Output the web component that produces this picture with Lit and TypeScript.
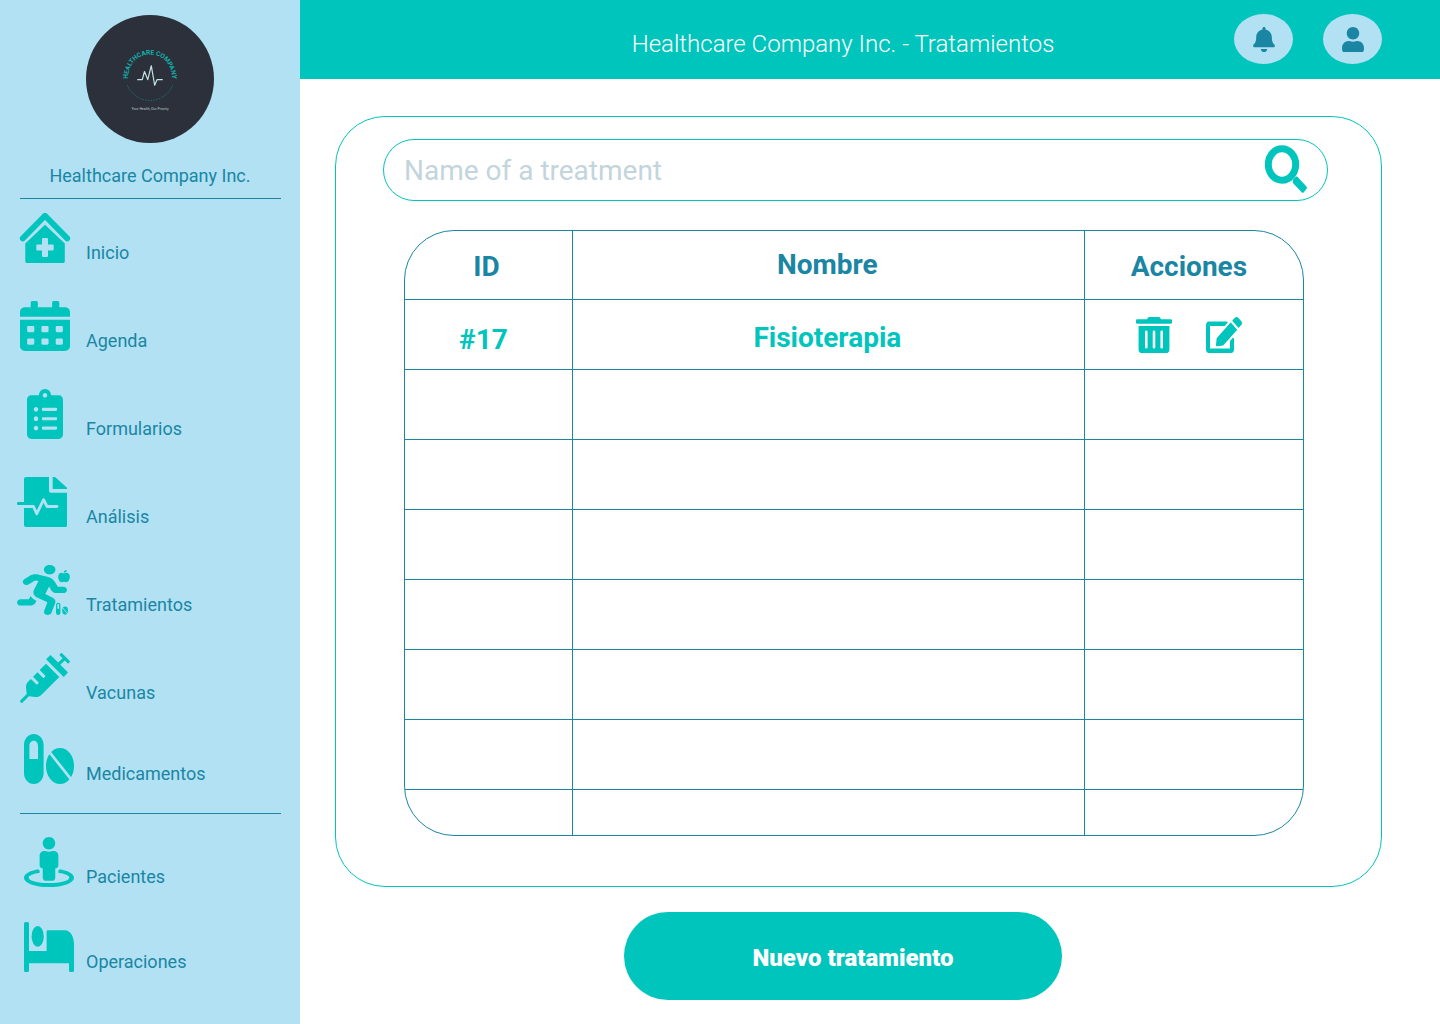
import { LitElement, html, svg, css, nothing, TemplateResult } from "lit";
import { customElement, property, state } from "lit/decorators.js";

/* Navigation icons share one 58x50 canvas so that their labels line up. */
const NAV_ICONS: Record<string, TemplateResult> = {
  home: svg`
    <g transform="translate(4 0)">
      <path d="M2.800 25.400 25 2.800 47.200 25.400" fill="none" stroke="currentColor" stroke-width="5.800" stroke-linecap="round" stroke-linejoin="round"/>
      <path fill-rule="evenodd" d="M25 11.8 44.8 30.6V48.6a1.4 1.4 0 0 1-1.4 1.4H6.7a1.4 1.4 0 0 1-1.4-1.4V30.6ZM23 25a1 1 0 0 0-1 1v5.4h-4.7a1 1 0 0 0-1 1v4.2a1 1 0 0 0 1 1H22V43a1 1 0 0 0 1 1h4a1 1 0 0 0 1-1v-5.4h4.7a1 1 0 0 0 1-1v-4.2a1 1 0 0 0-1-1H28V26a1 1 0 0 0-1-1Z"/>
    </g>`,
  calendar: svg`
    <svg x="4" y="0" width="50" height="50" viewBox="0 0 448 512" preserveAspectRatio="none">
      <path d="M0 464c0 26.500 21.500 48 48 48h352c26.500 0 48-21.500 48-48V192H0v272zm320-196c0-6.600 5.400-12 12-12h40c6.600 0 12 5.400 12 12v40c0 6.600-5.400 12-12 12h-40c-6.600 0-12-5.400-12-12v-40zm0 128c0-6.600 5.400-12 12-12h40c6.600 0 12 5.400 12 12v40c0 6.600-5.400 12-12 12h-40c-6.600 0-12-5.400-12-12v-40zM192 268c0-6.600 5.400-12 12-12h40c6.600 0 12 5.400 12 12v40c0 6.600-5.400 12-12 12h-40c-6.600 0-12-5.400-12-12v-40zm0 128c0-6.600 5.400-12 12-12h40c6.600 0 12 5.400 12 12v40c0 6.600-5.400 12-12 12h-40c-6.600 0-12-5.400-12-12v-40zM64 268c0-6.600 5.400-12 12-12h40c6.600 0 12 5.400 12 12v40c0 6.600-5.400 12-12 12H76c-6.600 0-12-5.400-12-12v-40zm0 128c0-6.600 5.400-12 12-12h40c6.600 0 12 5.400 12 12v40c0 6.600-5.400 12-12 12H76c-6.600 0-12-5.400-12-12v-40zM400 64h-48V16c0-8.800-7.200-16-16-16h-32c-8.800 0-16 7.200-16 16v48H160V16c0-8.800-7.200-16-16-16h-32c-8.800 0-16 7.200-16 16v48H48C21.500 64 0 85.500 0 112v48h448v-48c0-26.500-21.500-48-48-48z"/>
    </svg>`,
  clipboard: svg`
    <svg x="11" y="0" width="36" height="50" viewBox="0 0 384 512" preserveAspectRatio="none">
      <path d="M336 64h-80c0-35.300-28.700-64-64-64s-64 28.700-64 64H48C21.500 64 0 85.500 0 112v352c0 26.500 21.500 48 48 48h288c26.500 0 48-21.500 48-48V112c0-26.500-21.500-48-48-48zM96 424c-13.300 0-24-10.700-24-24s10.700-24 24-24 24 10.700 24 24-10.700 24-24 24zm0-96c-13.300 0-24-10.700-24-24s10.700-24 24-24 24 10.700 24 24-10.700 24-24 24zm0-96c-13.300 0-24-10.700-24-24s10.700-24 24-24 24 10.700 24 24-10.700 24-24 24zm96-192c13.300 0 24 10.700 24 24s-10.700 24-24 24-24-10.700-24-24 10.700-24 24-24zm128 368c0 4.400-3.600 8-8 8H168c-4.400 0-8-3.600-8-8v-16c0-4.400 3.600-8 8-8h144c4.400 0 8 3.600 8 8v16zm0-96c0 4.400-3.600 8-8 8H168c-4.400 0-8-3.600-8-8v-16c0-4.400 3.600-8 8-8h144c4.400 0 8 3.600 8 8v16zm0-96c0 4.400-3.600 8-8 8H168c-4.400 0-8-3.600-8-8v-16c0-4.400 3.600-8 8-8h144c4.400 0 8 3.600 8 8v16z"/>
    </svg>`,
  analysis: svg`
    <g transform="translate(1 0)">
      <path d="M9 0H32V13.700a2 2 0 0 0 2 2H50V48.500a1.500 1.500 0 0 1-1.500 1.500H9a2 2 0 0 1-2-2V28H1.300A1.300 1.300 0 0 1 0 26.700v-.4A1.300 1.300 0 0 1 1.300 25H7V2a2 2 0 0 1 2-2Z"/>
      <path d="M35.700 0h1.600a2 2 0 0 1 1.300.500L49.200 9.900a2 2 0 0 1 .8 1.600v.5H35.700Z"/>
      <path class="cut" d="M7 29.500H16.500L19.700 36.800 26.600 22.700 30 29.500H40" fill="none" stroke-width="2.800" stroke-linecap="round" stroke-linejoin="round"/>
    </g>`,
  treatment: svg`
    <svg x="1" y="0" width="50" height="50" viewBox="0 0 416 512" preserveAspectRatio="none">
      <path d="M272 96c26.510 0 48-21.490 48-48S298.510 0 272 0s-48 21.490-48 48 21.490 48 48 48zM113.690 317.470l-14.800 34.520H32c-17.670 0-32 14.330-32 32s14.330 32 32 32h77.450c19.250 0 36.580-11.440 44.110-29.090l8.790-20.520-10.670-6.300c-17.320-10.230-30.060-25.370-37.990-42.610zM384 223.990h-44.030l-26.060-53.250c-12.500-25.550-35.450-44.230-61.780-50.940l-71.080-21.140c-28.300-6.800-57.770-.550-80.840 17.140l-39.670 30.410c-14.030 10.750-16.690 30.830-5.920 44.860s30.840 16.660 44.860 5.920l39.690-30.410c7.670-5.890 17.440-8 25.270-6.140l14.700 4.370-37.460 87.390c-12.620 29.480-1.310 64.010 26.300 80.310l84.980 50.170-27.470 87.730c-5.280 16.860 4.110 34.820 20.970 40.090 3.190 1 6.410 1.480 9.580 1.480 13.610 0 26.230-8.770 30.520-22.450l31.640-101.060c5.910-20.770-2.890-43.080-21.640-54.390l-61.240-36.140 31.310-78.280 20.270 41.430c8 16.340 24.920 26.890 43.110 26.890H384c17.670 0 32-14.330 32-32s-14.330-31.990-32-31.990z"/>
    </svg>
    <path d="M48 8.600C46.500 7.600 44.600 7.500 43.300 8.800 42.200 10 42 11.800 42.400 13.500 42.900 15.600 44.200 17.200 45.600 17.200 46.500 17.200 47.200 16.700 48 16.700S49.500 17.200 50.400 17.200C51.900 17.200 53.300 15.300 53.700 13.300 54.100 11.600 53.800 10 52.700 8.800 51.400 7.500 49.500 7.600 48 8.600ZM47.700 7.800C47.700 6 48.700 5.100 50.700 5 50.700 6.800 49.600 7.800 47.700 7.800Z"/>
    <path fill-rule="evenodd" d="M40 40a2.200 2.200 0 0 1 4.400 0v7.800a2.200 2.200 0 0 1-4.400 0ZM41.300 40v3.800h1.800V40a.9.900 0 0 0-1.800 0Z"/>
    <ellipse cx="49.100" cy="45.600" rx="2.900" ry="4.100"/>
    <path class="cut" d="M46.500 42.500 51.600 49" fill="none" stroke-width=".8"/>`,
  syringe: svg`
    <svg x="4" y="0" width="50" height="50" viewBox="0 0 512 512">
      <path d="M201.500 174.800l55.700 55.800c3.100 3.100 3.100 8.200 0 11.300l-11.300 11.300c-3.100 3.100-8.200 3.100-11.300 0l-55.700-55.800-45.300 45.300 55.800 55.800c3.100 3.100 3.100 8.200 0 11.300l-11.300 11.300c-3.100 3.100-8.200 3.100-11.300 0L111 265.200l-26.400 26.400c-17.300 17.300-25.600 41.100-23 65.400l7.100 63.600L2.300 487c-3.100 3.100-3.100 8.200 0 11.300l11.300 11.300c3.100 3.100 8.200 3.100 11.300 0l66.300-66.300 63.600 7.100c23.900 2.600 47.900-5.400 65.400-23l181.900-181.900-135.700-135.700-64.900 65zm308.200-93.300L430.500 2.300c-3.100-3.100-8.200-3.100-11.300 0l-11.300 11.300c-3.100 3.100-3.100 8.200 0 11.300l28.300 28.300-45.300 45.300-56.600-56.600-17-17c-3.100-3.100-8.200-3.100-11.300 0l-33.900 33.900c-3.100 3.100-3.100 8.200 0 11.300l17 17L424.800 223l17 17c3.100 3.100 8.200 3.100 11.300 0l33.900-34c3.100-3.100 3.100-8.200 0-11.300l-73.500-73.500 45.300-45.300 28.300 28.300c3.100 3.100 8.200 3.100 11.300 0l11.300-11.300c3.100-3.200 3.100-8.200 0-11.400z"/>
    </svg>`,
  pills: svg`
    <g transform="translate(8 0)">
      <path fill-rule="evenodd" d="M0 11C0 5 4 0 9.800 0s9.800 5 9.800 11V39c0 6-4 11-9.800 11S0 45 0 39ZM5.400 12.500V25H14V12.500C14 9 12.500 6.800 9.700 6.800S5.400 9 5.400 12.500Z"/>
      <ellipse cx="36" cy="32" rx="14" ry="18"/>
      <path class="cut" d="M25 17.500 48 46.500" fill="none" stroke-width="2.800"/>
    </g>`,
  patient: svg`
    <svg x="8" y="0" width="50" height="50" viewBox="0 0 512 512">
      <path d="M367.900 329.760c-4.620 5.300-9.780 10.100-15.900 13.650v22.940c66.520 9.340 112 28.050 112 49.650 0 30.930-93.120 56-208 56S48 446.930 48 416c0-21.600 45.480-40.300 112-49.650v-22.940c-6.120-3.550-11.280-8.350-15.900-13.650C58.870 345.340 0 378.050 0 416c0 53.020 114.620 96 256 96s256-42.980 256-96c0-37.950-58.870-70.660-144.100-86.240zM256 128c35.350 0 64-28.650 64-64S291.350 0 256 0s-64 28.650-64 64 28.650 64 64 64zm-64 192v96c0 17.670 14.330 32 32 32h64c17.670 0 32-14.330 32-32v-96c17.670 0 32-14.330 32-32v-96c0-26.510-21.490-48-48-48h-11.800c-11.070 5.030-23.260 8-36.200 8s-25.130-2.970-36.200-8H208c-26.510 0-48 21.490-48 48v96c0 17.670 14.330 32 32 32z"/>
    </svg>`,
  bed: svg`
    <g transform="translate(8 0)">
      <path d="M1.500 0h2A1.500 1.500 0 0 1 5 1.500V29H22.600V9.500A1.300 1.300 0 0 1 23.900 8.200H41C46.500 8.200 50 15 50 22V48.500a1.500 1.500 0 0 1-1.500 1.500h-2a1.500 1.500 0 0 1-1.500-1.500V41.300H5V48.500A1.500 1.500 0 0 1 3.500 50h-2A1.500 1.500 0 0 1 0 48.500V1.500A1.500 1.500 0 0 1 1.500 0Z"/>
      <ellipse cx="13.700" cy="14.400" rx="6.100" ry="10.400"/>
    </g>`,
};

const BELL = "M224 512c35.320 0 63.970-28.650 63.970-64H160.030c0 35.350 28.650 64 63.970 64zm215.390-149.710c-19.320-20.760-55.470-51.990-55.470-154.290 0-77.700-54.480-139.900-127.940-155.160V32c0-17.670-14.320-32-31.980-32s-31.980 14.330-31.980 32v20.840C118.560 68.100 64.080 130.300 64.080 208c0 102.300-36.150 133.530-55.470 154.290-6 6.450-8.660 14.160-8.610 21.710.110 16.400 12.980 32 32.100 32h383.800c19.120 0 32-15.600 32.100-32 .050-7.550-2.610-15.270-8.610-21.710z";
const USER = "M224 256c70.700 0 128-57.300 128-128S294.700 0 224 0 96 57.300 96 128s57.300 128 128 128zm89.600 32h-16.700c-22.200 10.200-46.900 16-72.900 16s-50.600-5.800-72.900-16h-16.700C60.200 288 0 348.200 0 422.400V464c0 26.500 21.500 48 48 48h352c26.500 0 48-21.500 48-48v-41.600c0-74.200-60.200-134.400-134.400-134.400z";
const TRASH = "M32 464a48 48 0 0 0 48 48h288a48 48 0 0 0 48-48V128H32zm272-256a16 16 0 0 1 32 0v224a16 16 0 0 1-32 0zm-96 0a16 16 0 0 1 32 0v224a16 16 0 0 1-32 0zm-96 0a16 16 0 0 1 32 0v224a16 16 0 0 1-32 0zM432 32H312l-9.400-18.700A24 24 0 0 0 281.100 0H166.800a23.720 23.720 0 0 0-21.400 13.300L136 32H16A16 16 0 0 0 0 48v32a16 16 0 0 0 16 16h416a16 16 0 0 0 16-16V48a16 16 0 0 0-16-16z";
const EDIT = "M402.600 83.200l90.200 90.200c3.800 3.800 3.800 10 0 13.800L274.400 405.600l-92.800 10.300c-12.400 1.400-22.900-9.100-21.500-21.500l10.300-92.800L388.800 83.200c3.800-3.800 10-3.800 13.800 0zm162-22.900l-48.800-48.800c-15.200-15.200-39.900-15.200-55.200 0l-35.400 35.400c-3.800 3.800-3.800 10 0 13.800l90.200 90.200c3.800 3.800 10 3.800 13.800 0l35.400-35.400c15.200-15.300 15.200-40 0-55.200zM384 346.200V448H64V128h229.800c3.200 0 6.200-1.300 8.500-3.500l40-40c7.600-7.600 2.200-20.500-8.500-20.500H48C21.500 64 0 85.500 0 112v352c0 26.500 21.500 48 48 48h352c26.500 0 48-21.500 48-48V306.200c0-10.700-12.900-16-20.500-8.500l-40 40c-2.200 2.300-3.500 5.300-3.500 8.500z";

interface NavItem {
  icon: string;
  label: string;
}

@customElement("brand-logo")
class BrandLogo extends LitElement {
  static styles = css`
    :host {
      display: block;
    }
    .disc {
      display: block;
      width: 128px;
      height: 128px;
    }
    .arc {
      font: 700 13px Roboto, "Liberation Sans", sans-serif;
      fill: #12b3b0;
    }
    .motto {
      font: 400 7px Roboto, "Liberation Sans", sans-serif;
      fill: #b9c9cc;
    }
  `;

  render() {
    return html`
      <svg class="disc" viewBox="0 0 256 256" aria-label="Healthcare Company" role="img">
        <circle cx="128" cy="128" r="128" fill="#2b303a" />
        <path id="arc" d="M85 132V122A43 43 0 0 1 171 122V132" fill="none" />
        <text class="arc" text-anchor="middle">
          <textPath href="#arc" startOffset="50%">HEALTHCARE COMPANY</textPath>
        </text>
        <path d="M82.500 140A49 49 0 0 0 173.500 140" fill="none" stroke="#1a7f86" stroke-width="1.600" stroke-dasharray="3 2.400" />
        <path d="M102.500 129.300H112.500L117 113 123.500 129.300 130.600 101.500 137.300 140.500 142 129.300H153.500" fill="none" stroke="#c4e4e2" stroke-width="2.400" stroke-linejoin="round" />
        <text class="motto" x="128" y="189" text-anchor="middle">Your Health, Our Priority</text>
      </svg>
    `;
  }
}

@customElement("side-nav")
class SideNav extends LitElement {
  @property({ attribute: false }) groups: NavItem[][] = [];

  static styles = css`
    :host {
      display: block;
    }
    .list {
      list-style: none;
      margin: 0;
      padding: 0;
      display: flex;
      flex-direction: column;
      gap: var(--nav-gap, 38px);
    }
    .list + .list {
      margin-top: 31px;
    }
    .link {
      display: flex;
      align-items: flex-end;
      gap: 12px;
      color: #1a86a4;
      font-size: 18px;
      line-height: 20px;
      text-decoration: none;
    }
    .icon {
      width: 58px;
      height: 50px;
      flex: none;
      color: #00c5bc;
      fill: currentColor;
    }
    .cut {
      stroke: #b1e1f3;
    }
  `;

  render() {
    return html`
      <nav>
        ${this.groups.map(
          (group) => html`
            <ul class="list">
              ${group.map(
                (item) => html`
                  <li>
                    <a class="link" href="#${item.icon}">
                      <svg class="icon" viewBox="0 0 58 50" aria-hidden="true">${NAV_ICONS[item.icon]}</svg>
                      <span>${item.label}</span>
                    </a>
                  </li>
                `
              )}
            </ul>
          `
        )}
      </nav>
    `;
  }
}

interface Treatment {
  id: string;
  name: string;
}

@customElement("treatment-table")
class TreatmentTable extends LitElement {
  @property({ attribute: false }) rows: (Treatment | null)[] = [];

  static styles = css`
    :host {
      display: block;
      border: 1px solid #1a86a4;
      border-radius: 50px;
    }
    .table {
      width: 100%;
      border-collapse: separate;
      border-spacing: 0;
      table-layout: fixed;
      font-size: 28px;
      line-height: 32px;
      font-weight: 700;
      text-align: center;
    }
    .col-id {
      width: 18.7%;
    }
    .col-name {
      width: 57%;
    }
    .head,
    .cell {
      box-sizing: border-box;
      border-right: 1px solid #1a86a4;
      border-bottom: 1px solid #1a86a4;
    }
    .head {
      height: 69px;
      padding: 4px 4px 0 0;
      color: #1a86a4;
    }
    .cell {
      height: 70px;
      padding: 10px 10px 0 0;
      color: #00c5bc;
    }
    .head.name {
      padding: 0 2px 0 0;
    }
    .cell.name {
      padding: 6px 2px 0 0;
    }
    .actions-col {
      border-right: 0;
    }
    .head.actions-col {
      padding-right: 10px;
    }
    .cell.actions-col {
      padding-top: 0;
    }
    .last .cell {
      height: 45px;
      border-bottom: 0;
    }
    .actions {
      display: flex;
      justify-content: center;
      gap: 34px;
    }
    .action {
      padding: 0;
      border: 0;
      background: none;
      color: #00c5bc;
      cursor: pointer;
    }
    .glyph {
      display: block;
      width: 36px;
      height: 36px;
      fill: currentColor;
    }
  `;

  private renderRow(row: Treatment | null, last: boolean) {
    return html`
      <tr class=${last ? "last" : nothing}>
        <td class="cell">${row?.id}</td>
        <td class="cell name">${row?.name}</td>
        <td class="cell actions-col">
          ${row
            ? html`
                <div class="actions">
                  <button class="action" type="button" aria-label="Eliminar ${row.name}">
                    <svg class="glyph" viewBox="0 0 448 512" preserveAspectRatio="none"><path d=${TRASH} /></svg>
                  </button>
                  <button class="action" type="button" aria-label="Editar ${row.name}">
                    <svg class="glyph" viewBox="0 0 576 512" preserveAspectRatio="none"><path d=${EDIT} /></svg>
                  </button>
                </div>
              `
            : nothing}
        </td>
      </tr>
    `;
  }

  render() {
    return html`
      <table class="table">
        <colgroup>
          <col class="col-id" />
          <col class="col-name" />
          <col />
        </colgroup>
        <thead>
          <tr>
            <th class="head" scope="col">ID</th>
            <th class="head name" scope="col">Nombre</th>
            <th class="head actions-col" scope="col">Acciones</th>
          </tr>
        </thead>
        <tbody>
          ${this.rows.map((row, i) => this.renderRow(row, i === this.rows.length - 1))}
        </tbody>
      </table>
    `;
  }
}

@customElement("app-root")
class AppRoot extends LitElement {
  @state() private query = "";

  private primary: NavItem[][] = [
    [
      { icon: "home", label: "Inicio" },
      { icon: "calendar", label: "Agenda" },
      { icon: "clipboard", label: "Formularios" },
      { icon: "analysis", label: "Análisis" },
      { icon: "treatment", label: "Tratamientos" },
      { icon: "syringe", label: "Vacunas" },
    ],
    [{ icon: "pills", label: "Medicamentos" }],
  ];

  private secondary: NavItem[][] = [
    [
      { icon: "patient", label: "Pacientes" },
      { icon: "bed", label: "Operaciones" },
    ],
  ];

  private rows: (Treatment | null)[] = [
    { id: "#17", name: "Fisioterapia" },
    ...Array<null>(7).fill(null),
  ];

  static styles = css`
    :host {
      display: grid;
      grid-template-columns: 300px minmax(0, 1fr);
      min-height: 100vh;
      background: #fff;
      font-family: Roboto, "Liberation Sans", sans-serif;
    }
    .sidebar {
      box-sizing: border-box;
      padding: 15px 19px 24px 16px;
      background: #b1e1f3;
      color: #1a86a4;
    }
    .secondary {
      --nav-gap: 35px;
    }
    .brand {
      display: flex;
      flex-direction: column;
      align-items: center;
      gap: 22px;
      margin-left: 3px;
      padding-bottom: 12px;
      font-size: 18px;
      line-height: 21px;
    }
    .brand-name {
      margin: 0;
    }
    .rule {
      height: 1px;
      margin: 0 0 14px 4px;
      border: 0;
      background: #1a86a4;
    }
    .rule.lower {
      margin: 29px 0 23px 4px;
    }
    .bar {
      display: flex;
      align-items: center;
      box-sizing: border-box;
      min-height: 79px;
      padding: 0 58px 1px 152px;
      background: #00c5bc;
    }
    .title {
      flex: 1;
      margin: 0;
      padding-top: 10px;
      color: #fff;
      font-size: 24px;
      line-height: 28px;
      font-weight: 300;
      text-align: center;
    }
    .bar-actions {
      display: flex;
      gap: 30px;
    }
    .round {
      display: grid;
      place-items: center;
      width: 59px;
      height: 50px;
      padding: 0;
      border: 0;
      border-radius: 50%;
      background: #b1e1f3;
      color: #1a86a4;
      cursor: pointer;
    }
    .round-glyph {
      width: 22px;
      height: 25px;
      padding-left: 1px;
      fill: currentColor;
    }
    .card {
      margin: 37px 58px 0 35px;
      padding: 22px 53px 50px 47px;
      border: 1px solid #00c5bc;
      border-radius: 50px;
    }
    .search {
      display: flex;
      align-items: center;
      box-sizing: border-box;
      height: 62px;
      padding: 0 20px;
      border: 1px solid #00c5bc;
      border-radius: 31px;
    }
    .field {
      flex: 1;
      min-width: 0;
      padding: 2px 0 0;
      border: 0;
      outline: 0;
      background: none;
      color: #1a86a4;
      font: inherit;
      font-size: 28px;
      line-height: 34px;
    }
    .field::placeholder {
      color: #c3d5dc;
      opacity: 1;
    }
    .go {
      padding: 0 0 2px;
      border: 0;
      background: none;
      color: #00c5bc;
      cursor: pointer;
    }
    .lens {
      display: block;
      width: 42px;
      height: 48px;
    }
    .grid {
      margin: 29px 24px 0 21px;
    }
    .footer {
      display: flex;
      justify-content: center;
      padding: 25px 54px 24px 0;
    }
    .create {
      width: 438px;
      height: 88px;
      padding: 4px 0 0 20px;
      border: 0;
      border-radius: 44px;
      background: #00c5bc;
      color: #fff;
      font-family: inherit;
      font-size: 24px;
      line-height: 28px;
      font-weight: 900;
      cursor: pointer;
    }
  `;

  render() {
    return html`
      <aside class="sidebar">
        <div class="brand">
          <brand-logo></brand-logo>
          <p class="brand-name">Healthcare Company Inc.</p>
        </div>
        <hr class="rule" />
        <side-nav .groups=${this.primary}></side-nav>
        <hr class="rule lower" />
        <side-nav class="secondary" .groups=${this.secondary}></side-nav>
      </aside>
      <div>
        <header class="bar">
          <h1 class="title">Healthcare Company Inc. - Tratamientos</h1>
          <div class="bar-actions">
            <button class="round" type="button" aria-label="Notificaciones">
              <svg class="round-glyph" viewBox="0 0 448 512"><path d=${BELL} /></svg>
            </button>
            <button class="round" type="button" aria-label="Perfil">
              <svg class="round-glyph" viewBox="0 0 448 512"><path d=${USER} /></svg>
            </button>
          </div>
        </header>
        <main>
          <section class="card">
            <form class="search" role="search" @submit=${(e: Event) => e.preventDefault()}>
              <input
                class="field"
                type="text"
                aria-label="Name of a treatment"
                placeholder="Name of a treatment"
                .value=${this.query}
                @input=${(e: Event) => (this.query = (e.target as HTMLInputElement).value)}
              />
              <button class="go" type="submit" aria-label="Buscar">
                <svg class="lens" viewBox="0 0 42 48">
                  <ellipse cx="17" cy="19.500" rx="13.700" ry="15.700" fill="none" stroke="currentColor" stroke-width="7" />
                  <path d="M27.800 36.200V35L31 31.600H32.200L41.400 41.600A1.800 1.800 0 0 1 41.400 44L38.800 47.300A1.600 1.600 0 0 1 36.600 47.300L28.400 38.400A3 3 0 0 1 27.800 36.200Z" fill="currentColor" />
                </svg>
              </button>
            </form>
            <treatment-table class="grid" .rows=${this.rows}></treatment-table>
          </section>
          <div class="footer">
            <button class="create" type="button">Nuevo tratamiento</button>
          </div>
        </main>
      </div>
    `;
  }
}
